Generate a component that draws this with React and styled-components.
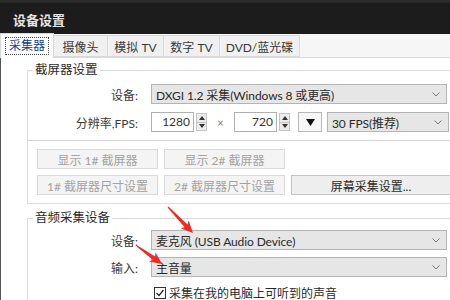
import React from "react";
import styled, { createGlobalStyle } from "styled-components";

const GlobalStyle = createGlobalStyle`
    html, body {
        margin: 0;
        padding: 0;
        background: #1c1c1c;
        overflow: hidden;
    }
    * {
        box-sizing: border-box;
    }
`;

const tabs = [
    { label: "采集器", width: 54, active: true },
    { label: "摄像头", width: 55 },
    { label: "模拟 TV", width: 57 },
    { label: "数字 TV", width: 57 },
    { label: "DVD/蓝光碟", width: 81 },
];

function arrowPoints(x1, y1, x2, y2) {
    const dx = x2 - x1;
    const dy = y2 - y1;
    const len = Math.sqrt(dx * dx + dy * dy);
    const ux = dx / len;
    const uy = dy / len;
    const nx = -uy;
    const ny = ux;
    const at = (d, w) => [x1 + ux * d + nx * w, y1 + uy * d + ny * w];
    const pts = [
        at(0, 0.6),
        at(len - 10, 2),
        at(len - 12, 5.5),
        [x2, y2],
        at(len - 12, -5.5),
        at(len - 10, -2),
        at(0, -0.6),
    ];
    return pts.map((p) => p.map((v) => v.toFixed(1)).join(",")).join(" ");
}

function Chevron() {
    return (
        <svg width="8" height="5" viewBox="0 0 8 5">
            <path d="M0.5 0.5 L4 4 L7.5 0.5" fill="none" stroke="#777" strokeWidth="1" />
        </svg>
    );
}

function Spinner() {
    return (
        <SpinButtons>
            <SpinHalf>
                <svg width="6" height="4" viewBox="0 0 6 4">
                    <path d="M0 4 L3 0 L6 4 Z" fill="#333" />
                </svg>
            </SpinHalf>
            <SpinHalf>
                <svg width="6" height="4" viewBox="0 0 6 4">
                    <path d="M0 0 L3 4 L6 0 Z" fill="#333" />
                </svg>
            </SpinHalf>
        </SpinButtons>
    );
}

function Select({ children, width }) {
    return (
        <SelectBox $width={width}>
            <span>{children}</span>
            <Chevron />
        </SelectBox>
    );
}

function App() {
    return (
        <Screen>
            <GlobalStyle />
            <TitleBar>设备设置</TitleBar>
            <Body>
                <LeftFrame />
                <Window>
                    <TabStrip>
                        {tabs.map((t) => (
                            <Tab key={t.label} $width={t.width} $active={t.active}>
                                {t.active ? <Focus>{t.label}</Focus> : t.label}
                            </Tab>
                        ))}
                    </TabStrip>
                    <Page>
                        <Group $height={142}>
                            <Legend>截屏器设置</Legend>
                            <Form>
                                <Label>设备:</Label>
                                <Select>DXGI 1.2 采集(Windows 8 或更高)</Select>
                                <Label>分辨率,FPS:</Label>
                                <ControlRow>
                                    <SpinField>
                                        <NumberBox>1280</NumberBox>
                                        <Spinner />
                                    </SpinField>
                                    <Times>×</Times>
                                    <SpinField>
                                        <NumberBox>720</NumberBox>
                                        <Spinner />
                                    </SpinField>
                                    <DropButton>
                                        <svg width="9" height="7" viewBox="0 0 9 7">
                                            <path d="M0 0 L9 0 L4.5 7 Z" fill="#111" />
                                        </svg>
                                    </DropButton>
                                    <Select width={122}>30 FPS(推荐)</Select>
                                </ControlRow>
                            </Form>
                            <Separator />
                            <ButtonGrid>
                                <Button disabled>显示 1# 截屏器</Button>
                                <Button disabled>显示 2# 截屏器</Button>
                                <span />
                                <Button disabled>1# 截屏器尺寸设置</Button>
                                <Button disabled>2# 截屏器尺寸设置</Button>
                                <Button>屏幕采集设置...</Button>
                            </ButtonGrid>
                        </Group>
                        <Group $height={100}>
                            <Legend>音频采集设备</Legend>
                            <Form $rowGap={7} $top={4}>
                                <Label>设备:</Label>
                                <Select>麦克风 (USB Audio Device)</Select>
                                <Label>输入:</Label>
                                <Select>主音量</Select>
                                <span />
                                <CheckRow>
                                    <CheckBox>
                                        <svg width="10" height="10" viewBox="0 0 10 10">
                                            <path d="M1.5 5 L4 7.5 L8.5 2" fill="none" stroke="#222" strokeWidth="1.2" />
                                        </svg>
                                    </CheckBox>
                                    采集在我的电脑上可听到的声音
                                </CheckRow>
                            </Form>
                        </Group>
                    </Page>
                </Window>
            </Body>
            <Arrows width="450" height="300" viewBox="0 0 450 300">
                <polygon points={arrowPoints(168, 207, 193, 233)} fill="#ee2a24" />
                <polygon points={arrowPoints(137, 246, 162, 264)} fill="#ee2a24" />
            </Arrows>
        </Screen>
    );
}

export default App;

const font = `Lato, "Noto Sans CJK SC", sans-serif`;

const Screen = styled.div`
    position: relative;
    width: 450px;
    height: 300px;
    overflow: hidden;
    display: flex;
    flex-direction: column;
    background: #1c1c1c;
    font-family: ${font};
    font-size: 12px;
    color: #333;
`;
const TitleBar = styled.div`
    height: 34px;
    flex-shrink: 0;
    display: flex;
    align-items: center;
    padding: 2px 13px 0;
    color: #e4e4e4;
    font-size: 13px;
    font-weight: bold;
    border-top: 3px solid #2a2a2a;
`;
const Body = styled.div`
    flex: 1;
    display: flex;
`;
const LeftFrame = styled.div`
    width: 6px;
    background: #151515;
    border-right: 1px solid #555;
`;
const Window = styled.div`
    width: 460px;
    flex-shrink: 0;
    display: flex;
    flex-direction: column;
    background: #f6f6f6;
`;
const TabStrip = styled.div`
    height: 24px;
    display: flex;
    align-items: flex-end;
    border-bottom: 1px solid #d9d9d9;
`;
const Tab = styled.div`
    width: ${(p) => p.$width}px;
    height: ${(p) => (p.$active ? 25 : 22)}px;
    margin-bottom: ${(p) => (p.$active ? -1 : 0)}px;
    display: flex;
    align-items: center;
    justify-content: center;
    background: ${(p) => (p.$active ? "#fff" : "#f0f0f0")};
    border: 1px solid #d9d9d9;
    border-bottom: ${(p) => (p.$active ? "none" : "1px solid #d9d9d9")};
    margin-left: -1px;
    color: ${(p) => (p.$active ? "#1a3a8a" : "#3a3a3a")};
    font-size: 12px;
    white-space: nowrap;
`;
const Focus = styled.span`
    padding: 0 3px;
    border: 1px dotted #444;
    line-height: 16px;
`;
const Page = styled.div`
    flex: 1;
    background: #fff;
    padding: 4px 0 0 26px;
    display: flex;
    flex-direction: column;
    gap: 6px;
`;
const Group = styled.fieldset`
    margin: 0;
    width: 440px;
    height: ${(p) => p.$height}px;
    flex-shrink: 0;
    padding: 0;
    border: 1px solid #dcdcdc;
    border-right: none;
`;
const Legend = styled.legend`
    margin-left: 5px;
    padding: 0 2px;
    font-size: 12.5px;
    line-height: 16px;
    color: #2a2a2a;
`;
const Form = styled.div`
    display: grid;
    grid-template-columns: 110px 1fr;
    column-gap: 13px;
    row-gap: ${(p) => p.$rowGap || 8}px;
    align-items: center;
    padding-top: ${(p) => p.$top || 6}px;
`;
const Label = styled.div`
    text-align: right;
    color: #3a3a3a;
`;
const SelectBox = styled.div`
    width: ${(p) => p.$width || 296}px;
    height: 20px;
    display: flex;
    align-items: center;
    justify-content: space-between;
    padding: 0 6px 0 4px;
    background: #e6e6e6;
    border: 1px solid #b4b4b4;
    color: #2a2a2a;
    letter-spacing: -0.1px;
    white-space: nowrap;
`;
const ControlRow = styled.div`
    display: flex;
    align-items: center;
`;
const SpinField = styled.div`
    display: flex;
    align-items: center;
    gap: 2px;
`;
const NumberBox = styled.div`
    width: 43px;
    height: 20px;
    border: 1px solid #b0b0b0;
    background: #fff;
    text-align: right;
    padding-right: 3px;
    line-height: 18px;
`;
const SpinButtons = styled.div`
    width: 11px;
    height: 18px;
    display: flex;
    flex-direction: column;
    border: 1px solid #c4c4c4;
    background: #ececec;
`;
const SpinHalf = styled.div`
    flex: 1;
    display: flex;
    align-items: center;
    justify-content: center;
    & + & {
        border-top: 1px solid #c4c4c4;
    }
`;
const Times = styled.div`
    width: 27px;
    text-align: center;
    color: #777;
    font-size: 11px;
`;
const DropButton = styled.div`
    width: 24px;
    height: 20px;
    margin: 0 5px 0 8px;
    display: flex;
    align-items: center;
    justify-content: center;
    border: 1px solid #b8b8b8;
    background: #f7f7f7;
`;
const Separator = styled.div`
    height: 1px;
    margin-top: 8px;
    background: #d4d4d4;
`;
const ButtonGrid = styled.div`
    display: grid;
    grid-template-columns: 121px 121px 160px;
    column-gap: 6px;
    row-gap: 6px;
    padding: 8px 0 0 9px;
`;
const Button = styled.div`
    height: 20px;
    display: flex;
    align-items: center;
    justify-content: center;
    border: 1px solid ${(p) => (p.disabled ? "#dadada" : "#c4c4c4")};
    background: ${(p) => (p.disabled ? "#f4f4f4" : "#eeeeee")};
    color: ${(p) => (p.disabled ? "#a3a3a3" : "#2a2a2a")};
    white-space: nowrap;
`;
const CheckRow = styled.div`
    display: flex;
    align-items: center;
    gap: 3px;
    padding-left: 3px;
    color: #2a2a2a;
    white-space: nowrap;
`;
const CheckBox = styled.div`
    width: 12px;
    height: 12px;
    display: flex;
    align-items: center;
    justify-content: center;
    border: 1px solid #333;
    background: #fff;
`;
const Arrows = styled.svg`
    position: absolute;
    left: 0;
    top: 0;
    pointer-events: none;
`;
